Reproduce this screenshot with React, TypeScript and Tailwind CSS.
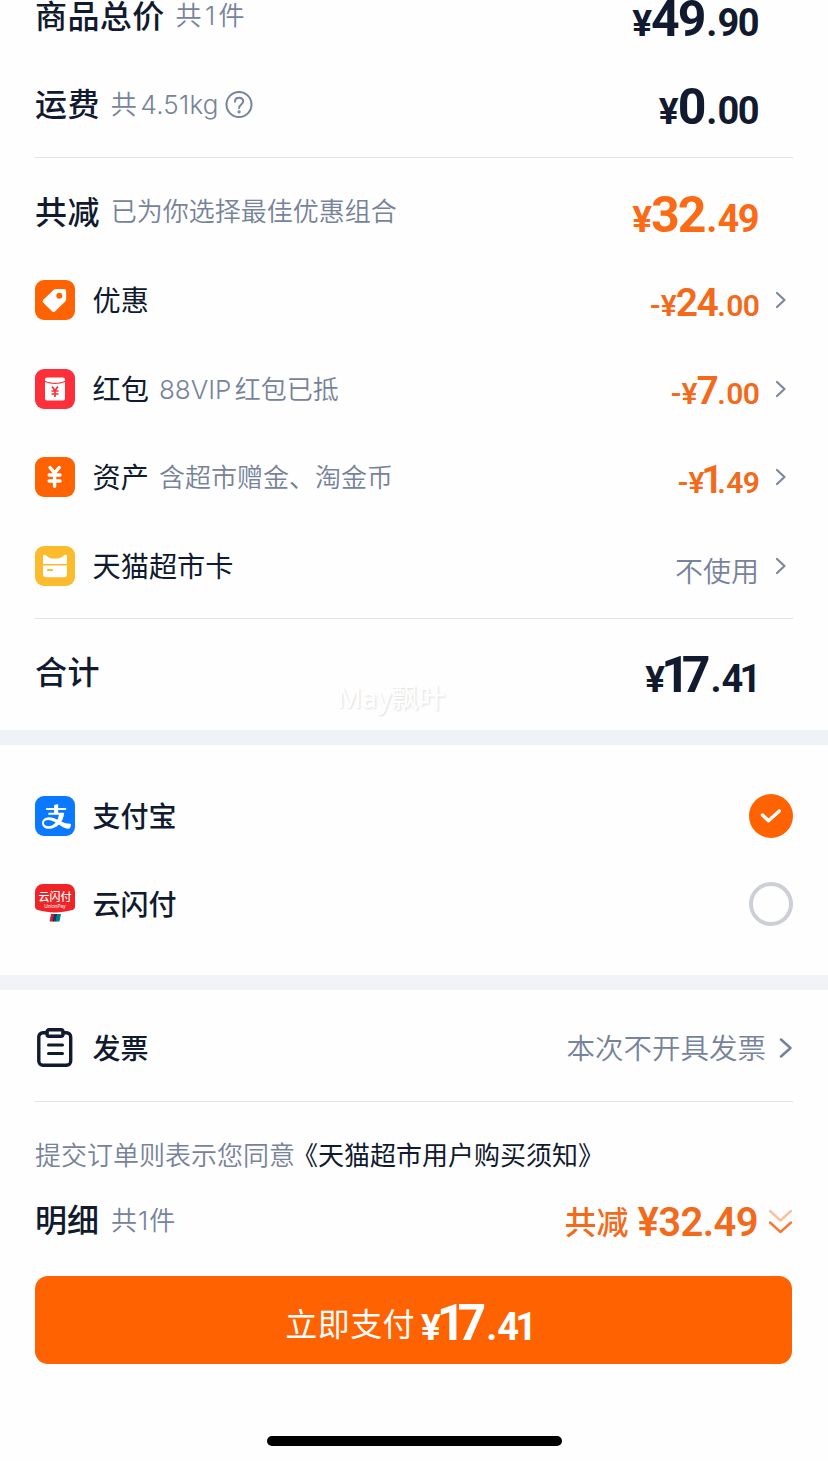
import React from 'react';
import { AiOutlineAlipay } from 'react-icons/ai';
import clsx from 'clsx';

const CJK = "font-['Inter','Noto_Sans_CJK_SC',sans-serif]";
const NUM = "font-['Roboto','Noto_Sans_CJK_SC',sans-serif]";

// Roboto digits are tabular, the "1" is pulled in so it sits tight like in a DIN face
function Digits({ text }: { text: string }) {
  return (
    <>
      {text.split('').map((c, i) => (
        <span key={i} className={clsx(c === '1' && (i < text.length - 1 || text.length === 1 ? '-mr-[0.12em] -ml-[0.06em]' : '-mr-[0.05em] -ml-[0.06em]'))}>{c}</span>
      ))}
    </>
  );
}

function Price({ value, size = 'lg', className }: { value: string; size?: 'lg' | 'sm'; className?: string }) {
  const negative = value.startsWith('-');
  const [whole, cents] = value.replace('-', '').split('.');
  const lg = size === 'lg';
  return (
    <span className={clsx('flex items-baseline leading-none', NUM, lg ? 'font-bold' : 'font-semibold', className)}>
      {negative && <span className="text-[30px] leading-none">-</span>}
      <span className={clsx('leading-none', lg ? 'text-[37px] tracking-[-1px]' : 'text-[30px] tracking-[-1px]')}>¥</span>
      <span className={clsx('leading-none', lg ? 'text-[50px] tracking-[-2px]' : 'text-[39px] tracking-[-1.5px]')}><Digits text={whole} /></span>
      <span className={clsx('leading-none', lg ? 'mr-px ml-[2px] text-[38px] tracking-[-1px]' : 'mr-px text-[30px] tracking-[-0.5px]')}>.</span>
      <span className={clsx('leading-none', lg ? 'text-[38px] tracking-[-1.5px]' : 'text-[30px] tracking-[-0.8px]')}><Digits text={cents} /></span>
    </span>
  );
}

function Chevron() {
  return (
    <svg width="12" height="18" viewBox="0 0 12 18" fill="none" stroke="#7c889c" strokeWidth="2.2" strokeLinecap="round" strokeLinejoin="round">
      <path d="M2 2 9.5 9 2 16" />
    </svg>
  );
}

function CouponIcon() {
  return (
    <svg width="40" height="40" viewBox="0 0 40 40">
      <rect width="40" height="40" rx="9" fill="#ff6200" />
      <path d="M20.800 9h8.200a2.200 2.200 0 0 1 2.200 2.200v8.100c0 .8-.3 1.400-.8 2L20 31.400a2 2 0 0 1-2.800 0L8.300 22.700a2 2 0 0 1 0-2.900L18.800 9.800c.6-.5 1.200-.8 2-.8z" fill="#fff" />
      <circle cx="24.300" cy="15.700" r="3" fill="#ff6200" />
    </svg>
  );
}

function RedPacketIcon() {
  return (
    <svg width="40" height="40" viewBox="0 0 40 40">
      <rect width="40" height="40" rx="9" fill="#fc2f3b" />
      <path d="M12 8.500h16a2 2 0 0 1 2 2v1.200c-5.500 2.700-14.500 2.700-20 0v-1.200a2 2 0 0 1 2-2z" fill="#fff" />
      <path d="M10 13c5.500 2.600 14.500 2.600 20 0v16.500a2 2 0 0 1-2 2H12a2 2 0 0 1-2-2z" fill="#fff" />
      <path d="m17 17.500 3 4 3-4M20 21.500V28M16.500 22h7M16.500 25h7" fill="none" stroke="#fc2f3b" strokeWidth="1.700" />
    </svg>
  );
}

function AssetIcon() {
  return (
    <svg width="40" height="40" viewBox="0 0 40 40">
      <rect width="40" height="40" rx="9" fill="#ff6200" />
      <path d="m15 10.500 4.600 5.300 4.600-5.300M19.600 16.500v12.800M14.200 18h10.800M14.200 24h10.800" fill="none" stroke="#fff" strokeWidth="3.400" strokeLinejoin="round" strokeLinecap="round" />
    </svg>
  );
}

function CatCardIcon() {
  return (
    <svg width="40" height="40" viewBox="0 0 40 40">
      <rect width="40" height="40" rx="9" fill="#fbbb2d" />
      <path d="M8 18v-7.500c0-1.800 1.500-2.300 2.700-1.300l3.300 2.300c1.200.8 2 1 3 1h6c1 0 1.800-.2 3-1l3.300-2.300c1.200-1 2.700-.5 2.700 1.300V18z" fill="#fff" />
      <path d="M8 19.500h24V28a3.200 3.200 0 0 1-3.200 3.200H11.200A3.200 3.200 0 0 1 8 28z" fill="#fff" />
      <path d="M12.800 24h4.400" stroke="#fbbb2d" strokeWidth="1.800" strokeLinecap="round" />
    </svg>
  );
}

function AlipayIcon() {
  return (
    <span className="flex size-10 items-center justify-center rounded-[9px] bg-[#0a78ff] pl-0.5">
      <AiOutlineAlipay className="size-[33px] text-white" />
    </span>
  );
}

function UnionPayIcon() {
  return (
    <svg width="40" height="40" viewBox="0 0 40 40">
      <path d="M8 0h24a8 8 0 0 1 8 8v14.500c0 1.800-1 3.200-2.700 3.600C26 29.200 14 29.200 2.700 26.100 1 25.700 0 24.300 0 22.500V8a8 8 0 0 1 8-8z" fill="#ef2426" />
      <text x="20" y="16.500" textAnchor="middle" fontSize="11" fontWeight="500" fill="#fff" fontFamily="Noto Sans CJK SC">云闪付</text>
      <text x="20" y="23.500" textAnchor="middle" fontSize="4.800" fill="#fff" fontFamily="Inter">UnionPay</text>
      <path d="M16 30h4.500l-1.500 7.500h-4.500z" fill="#d0202e" />
      <path d="M19 30h4l-1.500 7.500h-4z" fill="#123a68" />
      <path d="M22 30h4l-1.500 7.500h-4z" fill="#0a7f80" />
    </svg>
  );
}

function InvoiceIcon() {
  return (
    <svg width="40" height="40" viewBox="0 0 40 40" fill="none" stroke="#111a2e" strokeWidth="3.400" strokeLinecap="round" strokeLinejoin="round">
      <path d="M12 4.700H8A4.200 4.200 0 0 0 3.800 9v24A4.200 4.200 0 0 0 8 37.200h23.500a4.200 4.200 0 0 0 4.200-4.200V9a4.200 4.200 0 0 0-4.200-4.300H28" />
      <rect x="12" y="1.800" width="16" height="6.400" rx="2" />
      <path d="M13.500 17h14M13.500 25.500h14" strokeWidth="3" />
    </svg>
  );
}

interface Discount { icon: React.ReactNode; label: string; note?: string; amount?: string; }

const discounts: Discount[] = [
  { icon: <CouponIcon />, label: '优惠', amount: '-24.00' },
  { icon: <RedPacketIcon />, label: '红包', note: '88VIP 红包已抵', amount: '-7.00' },
  { icon: <AssetIcon />, label: '资产', note: '含超市赠金、淘金币', amount: '-1.49' },
  { icon: <CatCardIcon />, label: '天猫超市卡' },
];

function Line() {
  return <div className="mx-[35px] h-px bg-[#e2e4e8]" />;
}

function SummaryRow({ label, note, value, accent, className }: {
  label: string; note?: React.ReactNode; value: string; accent?: boolean; className?: string;
}) {
  return (
    <div className={clsx('flex items-center pr-[70px] pl-[35px]', className)}>
      <span className="pt-[2px] text-[32px] leading-none font-medium tracking-[0.4px]">{label}</span>
      {note && <span className="ml-[11px] flex items-center pt-px text-[26px] leading-none font-[350] text-[#77839a] [word-spacing:-4px]">{note}</span>}
      <Price value={value} className={clsx('ml-auto pt-[6px]', accent && 'text-[#fb6a14]')} />
    </div>
  );
}

function DiscountRow({ icon, label, note, amount }: Discount) {
  return (
    <div className="flex h-[88.5px] items-center pr-[41px] pl-[35px]">
      {icon}
      <span className="ml-[17.5px] pt-[2px] text-[28.2px] leading-none">{label}</span>
      {note && <span className="ml-[10px] pt-[2px] text-[26px] leading-none font-[350] text-[#77839a] [word-spacing:-4px]">{note}</span>}
      {amount
        ? <Price value={amount} size="sm" className="ml-auto pt-[6px] text-[#f26a1b]" />
        : <span className="ml-auto pt-[13px] text-[28px] leading-none font-[350] text-[#77839a]">不使用</span>}
      <span className="ml-4"><Chevron /></span>
    </div>
  );
}

export default function App() {
  return (
    <div className={clsx('relative h-[1461px] w-[828px] overflow-hidden bg-[#fefefe] text-[#111a2e]', CJK)}>
      <section className="h-[730px] overflow-hidden">
        <SummaryRow className="-mt-[29px] h-[89px]" label="商品总价" note="共 1 件" value="49.90" />
        <SummaryRow
          className="h-[88px]"
          label="运费"
          note={
            <>
              <span className="tracking-[0.2px]">共 4.51kg</span>
              <svg className="ml-[6px]" width="28" height="28" viewBox="0 0 28 28" fill="none" stroke="#77839a" strokeWidth="2" strokeLinecap="round">
                <circle cx="14" cy="13.500" r="12.500" />
                <path d="M10 10.700c0-5.200 8.200-5.200 8.200-.4 0 3.200-4.100 3.200-4.100 6.700" />
                <circle cx="14.100" cy="20.800" r=".6" fill="#77839a" />
              </svg>
            </>
          }
          value="0.00"
        />
        <div className="pt-[9px]"><Line /></div>
        <SummaryRow className="mt-[9px] h-[89px]" label="共减" note="已为你选择最佳优惠组合" value="32.49" accent />
        {discounts.map((d) => <DiscountRow key={d.label} {...d} />)}
        <div className="pt-2"><Line /></div>
        <SummaryRow className="h-[106px]" label="合计" value="17.41" />
      </section>

      <div className="h-[15px] bg-[#eff2f6]" />

      <section className="py-[27px]">
        <div className="flex h-[88px] items-center px-[35px]">
          <AlipayIcon />
          <span className="ml-[17.5px] pt-[2px] text-[28px] leading-none font-medium">支付宝</span>
          <span className="ml-auto flex size-11 items-center justify-center rounded-full bg-[#ff6200]">
            <svg width="22" height="18" viewBox="0 0 22 18" fill="none" stroke="#fff" strokeWidth="3.400" strokeLinecap="round" strokeLinejoin="round">
              <path d="m2.500 8 6 5.800L19.300 4" />
            </svg>
          </span>
        </div>
        <div className="flex h-[88px] items-center px-[35px]">
          <UnionPayIcon />
          <span className="ml-[17.5px] pt-[2px] text-[28px] leading-none font-medium">云闪付</span>
          <span className="ml-auto size-11 rounded-full border-4 border-[#ccd0d6]" />
        </div>
      </section>

      <div className="h-[15px] bg-[#f1f3f7]" />

      <section>
        <div className="flex h-[111px] items-center px-[35px] pt-[5px]">
          <InvoiceIcon />
          <span className="ml-[17.5px] pt-[2px] text-[28px] leading-none font-medium">发票</span>
          <span className="ml-auto pt-[2px] text-[28.5px] leading-none font-[350] text-[#77839a]">本次不开具发票</span>
          <svg className="ml-3" width="15" height="22" viewBox="0 0 15 22" fill="none" stroke="#77839a" strokeWidth="2.600" strokeLinecap="round" strokeLinejoin="round">
            <path d="m3 2.500 9.500 8.500L3 19.500" />
          </svg>
        </div>
        <Line />
        <p className="mt-[38px] flex h-[30px] items-center px-[35px] pt-[2px] text-[26px] leading-none whitespace-nowrap">
          <span className="font-[350] text-[#77839a]">提交订单则表示您同意</span>
          <span className="-ml-[3px]">《天猫超市用户购买须知》</span>
        </p>
        <div className="mt-7 flex h-11 items-center px-[35px]">
          <span className="pt-[2px] text-[32px] leading-none font-medium">明细</span>
          <span className="ml-3 pt-[2px] text-[26px] leading-none font-[350] tracking-[1px] text-[#77839a]">共1件</span>
          <span className="ml-auto pt-[5px] text-[32px] leading-none font-medium text-[#f26a1b]">共减</span>
          <span className={clsx('ml-[9px] pt-[6px] text-[40px] leading-none font-semibold tracking-[-0.6px] text-[#f26a1b]', NUM)}>¥32.49</span>
          <svg className="ml-[9px] mt-1" width="26" height="28" viewBox="0 0 26 28" fill="none" strokeWidth="2.400" strokeLinecap="round" strokeLinejoin="round">
            <path d="m3 3 10.500 9.500L24 3" stroke="#fac0a0" />
            <path d="m3 14.500 10.500 9.500L24 14.500" stroke="#f47a35" />
          </svg>
        </div>
        <div className="pr-9 pl-[35px] pt-[34px]">
          <button className="flex h-[88px] w-full items-center justify-center rounded-[13px] bg-[#ff6200] pr-2 text-white">
            <span className="pt-[10px] text-[32px] leading-none tracking-[0.4px]">立即支付</span>
            <Price value="17.41" className="ml-[6px] pt-[6px]" />
          </button>
        </div>
        <div className="mx-auto mt-[72px] h-[10px] w-[295px] rounded-full bg-black" />
      </section>

      <span className="absolute top-[684px] left-[337px] font-['Noto_Sans','Noto_Sans_CJK_SC',sans-serif] text-[27px] leading-[28px] font-medium text-white [text-shadow:1px_1px_2px_#dedede]">May飘叶</span>
    </div>
  );
}
